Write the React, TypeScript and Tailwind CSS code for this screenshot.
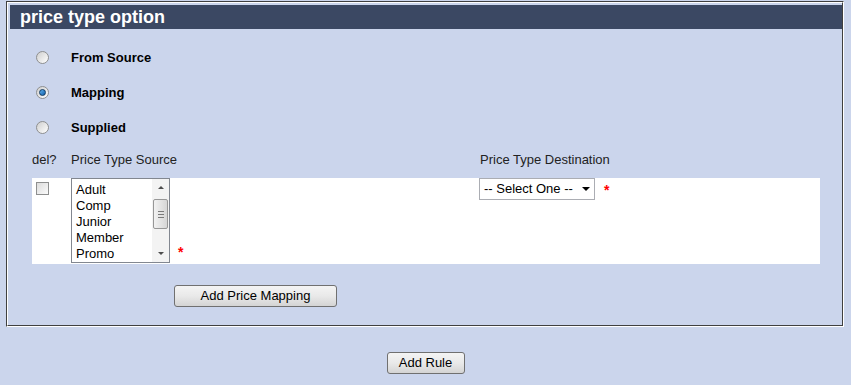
import React from "react";

function Radio({ checked }: { checked?: boolean }) {
  return (
    <div className="flex h-[13px] w-[13px] items-center justify-center rounded-full border border-[#8e8f8f] bg-gradient-to-br from-[#cfcfcf] to-[#ffffff]">
      {checked && (
        <div className="h-[7px] w-[7px] rounded-full border border-[#0f3a63] bg-gradient-to-br from-[#5fb2f0] to-[#0d5fa8]" />
      )}
    </div>
  );
}

function Asterisk() {
  return <span className="text-[14px] font-bold leading-[14px] text-[#ff0000]">*</span>;
}

function Listbox({ items }: { items: string[] }) {
  return (
    <div className="flex h-[85px] w-[99px] border border-[#828790] bg-white">
      <div className="flex-1 pl-[4px] pt-[3px]">
        {items.map((item) => (
          <div key={item} className="h-[16px] leading-[16px]">
            {item}
          </div>
        ))}
      </div>
      {/* scrollbar */}
      <div className="flex w-[17px] flex-col bg-[#f3f3f3]">
        <div className="flex h-[17px] items-center justify-center">
          <div className="h-0 w-0 border-x-[3px] border-b-[3px] border-x-transparent border-b-[#4d4d4d]" />
        </div>
        <div className="flex-1 px-[1px] pt-[3px]">
          <div className="flex h-[30px] flex-col items-center justify-center gap-[2px] rounded-[2px] border border-[#979797] bg-gradient-to-r from-[#f2f2f2] to-[#d6d6d6]">
            <div className="h-px w-[6px] bg-[#7a7a7a]" />
            <div className="h-px w-[6px] bg-[#7a7a7a]" />
            <div className="h-px w-[6px] bg-[#7a7a7a]" />
          </div>
        </div>
        <div className="flex h-[17px] items-center justify-center">
          <div className="h-0 w-0 border-x-[3px] border-t-[3px] border-x-transparent border-t-[#4d4d4d]" />
        </div>
      </div>
    </div>
  );
}

function Button({ label, width }: { label: string; width: string }) {
  return (
    <button
      className={`h-[22px] ${width} rounded-[3px] border border-[#707070] bg-gradient-to-b from-[#f4f4f4] via-[#e9e9e9] to-[#d4d4d4] text-[13px] leading-[20px] text-black`}
    >
      {label}
    </button>
  );
}

export default function App() {
  const options = [
    { label: "From Source", checked: false },
    { label: "Mapping", checked: true },
    { label: "Supplied", checked: false },
  ];

  return (
    <div className="min-h-screen bg-[#cbd5ec] pt-px font-['Liberation_Sans',Arial,sans-serif] text-[13px] text-black">
      {/* fieldset with groove border */}
      <div className="ml-[6px] w-[838px] border border-b-white border-l-[#404040] border-r-white border-t-[#404040]">
        <div className="h-[324px] border border-b-[#404040] border-l-white border-r-[#404040] border-t-white pl-[2px] pt-[2px]">
          <div className="h-[24px] bg-[#3b4863] pl-[10px] text-[18px] font-bold leading-[24px] text-white">
            price type option
          </div>

          <div className="mt-[11px]">
            {options.map((o) => (
              <div key={o.label} className="flex h-[35px] items-center pl-[26px]">
                <Radio checked={o.checked} />
                <span className="ml-[22px] font-bold">{o.label}</span>
              </div>
            ))}
          </div>

          <div className="mt-[5px] flex h-[20px] items-center pl-[22px] leading-[20px] text-[#222]">
            <div className="w-[39px]">del?</div>
            <div className="w-[409px]">Price Type Source</div>
            <div>Price Type Destination</div>
          </div>

          <div className="ml-[22px] mt-[8px] flex h-[86px] w-[788px] bg-white">
            <div className="w-[39px] pl-[4px] pt-[4px]">
              <div className="h-[13px] w-[13px] border border-[#8e8f8f] bg-gradient-to-br from-[#dcdcdc] to-[#fbfbfb]" />
            </div>
            <div className="flex w-[408px] items-end">
              <div className="self-start">
                <Listbox items={["Adult", "Comp", "Junior", "Member", "Promo"]} />
              </div>
              <div className="mb-[2px] ml-[8px]">
                <Asterisk />
              </div>
            </div>
            <div className="flex items-start">
              <div className="flex h-[22px] w-[116px] items-center justify-between border border-[#abadb3] bg-white pl-[4px] pr-[4px]">
                <span>-- Select One --</span>
                <div className="h-0 w-0 border-x-[4px] border-t-[4px] border-x-transparent border-t-black" />
              </div>
              <div className="ml-[9px] mt-[3px]">
                <Asterisk />
              </div>
            </div>
          </div>

          <div className="ml-[164px] mt-[21px]">
            <Button label="Add Price Mapping" width="w-[163px]" />
          </div>
        </div>
      </div>

      <div className="mt-[25px] flex justify-center">
        <Button label="Add Rule" width="w-[78px]" />
      </div>
    </div>
  );
}
